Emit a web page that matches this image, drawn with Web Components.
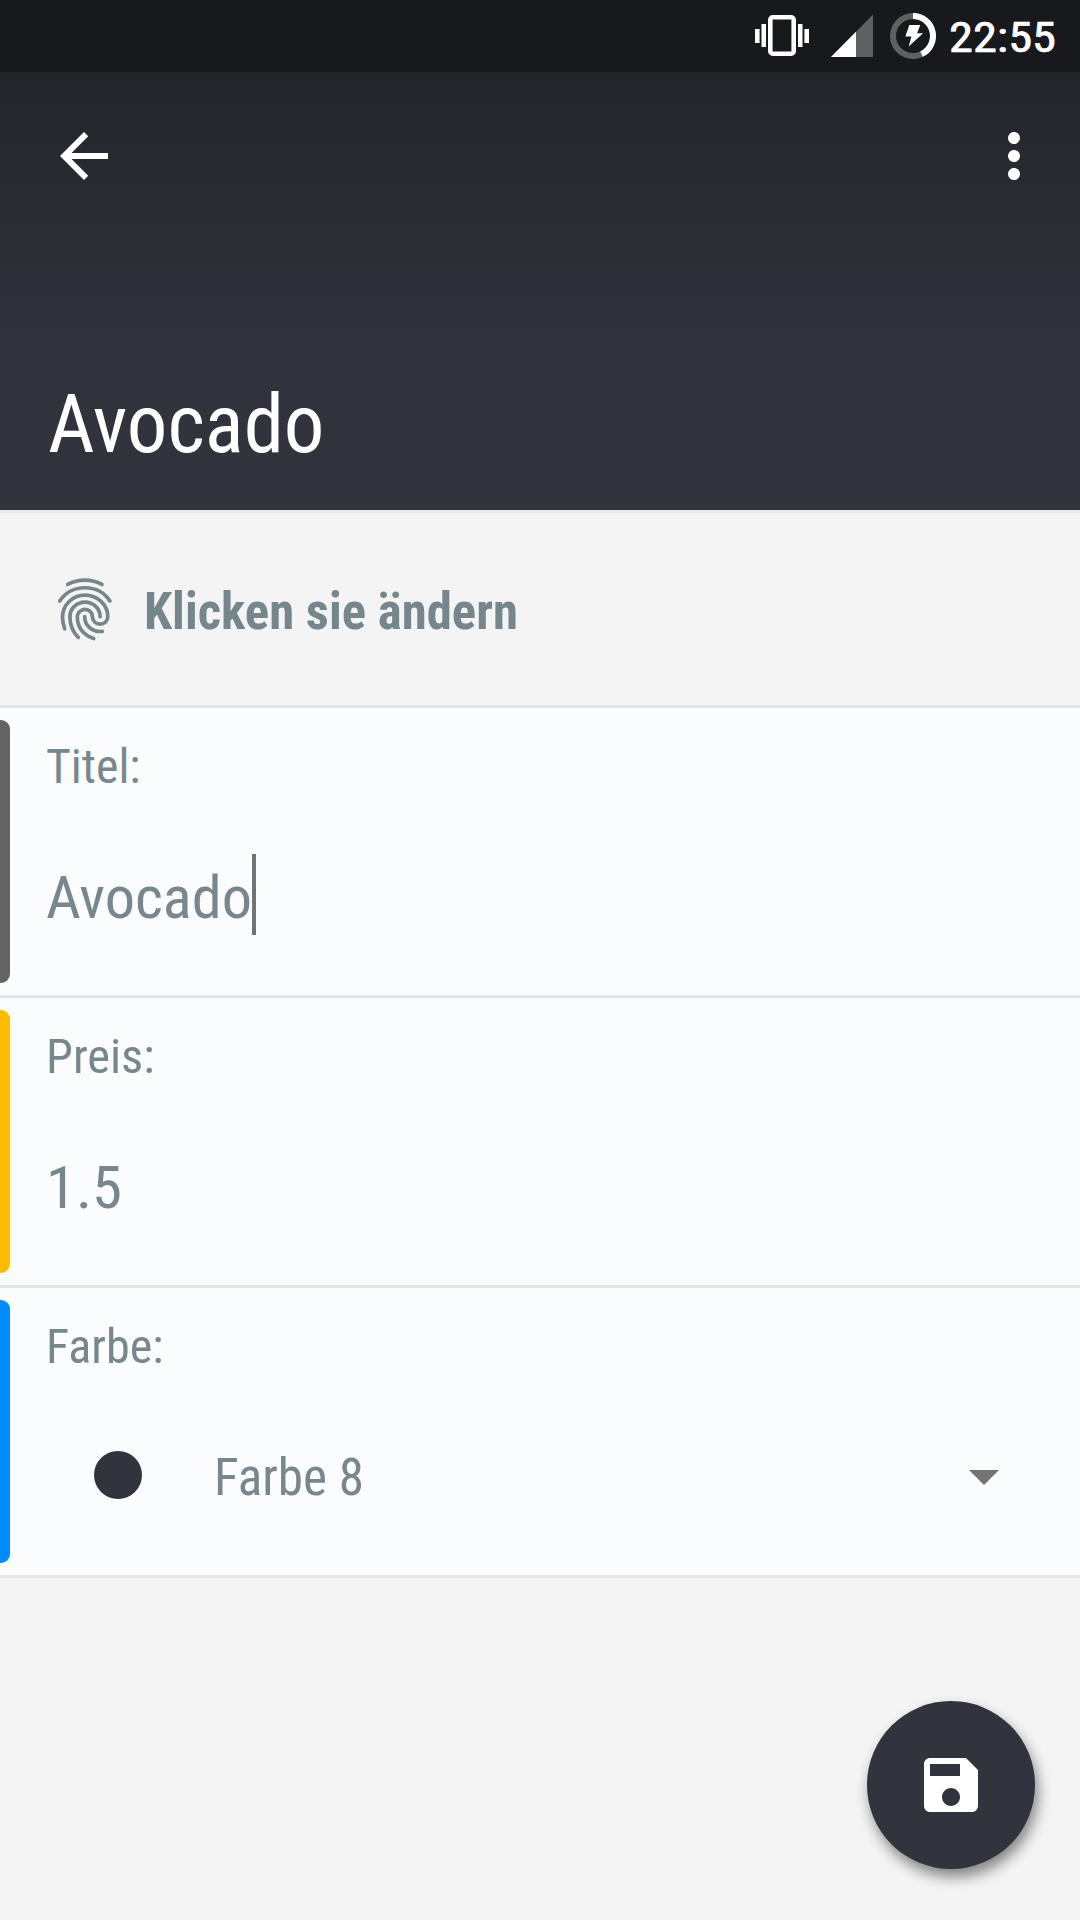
<!DOCTYPE html>
<html lang="de">
<head>
<meta charset="UTF-8">
<title>Avocado</title>
<style>
  body {
    margin: 0;
    background: #f4f4f4;
    color: #78868d;
    font-family: "Roboto Condensed", Roboto, "Liberation Sans", sans-serif;
  }
</style>
</head>
<body>
<edit-screen>
  <status-bar slot="header" time="22:55"></status-bar>
  <title-bar slot="header"><fit-text size="82" width="276.5">Avocado</fit-text></title-bar>
  <hint-row><fit-text size="52" width="374" weight="700">Klicken sie ändern</fit-text></hint-row>
  <form-row label="Titel:" label-width="94.5" style="--accent: #636363">
    <fit-text size="60" width="206">Avocado</fit-text><text-caret></text-caret>
  </form-row>
  <form-row label="Preis:" label-width="108.5" style="--accent: #ffbc00">
    <fit-text size="60" width="76">1.5</fit-text>
  </form-row>
  <form-row label="Farbe:" label-width="117.5" style="--accent: #008cff">
    <color-select><fit-text size="51" width="150">Farbe 8</fit-text></color-select>
  </form-row>
  <save-button slot="fab"></save-button>
</edit-screen>

<script>
// one line of text, set to a fixed advance width
class FitText extends HTMLElement {
  constructor() {
    super();
    this.attachShadow({ mode: 'open' });
  }

  connectedCallback() {
    const size = Number(this.getAttribute('size'));
    const width = this.getAttribute('width');
    const weight = this.getAttribute('weight') || 400;
    this.shadowRoot.innerHTML = `
      <style>
        :host { display: block; flex: none; width: ${width}px; height: ${size}px; }
        svg { display: block; overflow: visible; }
        text { font-size: ${size}px; font-weight: ${weight}; font-stretch: var(--stretch, 75%); fill: currentColor; stroke: currentColor; stroke-width: var(--embolden, 0); }
      </style>
      <svg width="${width}" height="${size}">
        <text x="0" y="${size * 0.8}" textLength="${width}" lengthAdjust="spacingAndGlyphs"></text>
      </svg>
    `;
    this.shadowRoot.querySelector('text').textContent = this.textContent;
  }
}

class EditScreen extends HTMLElement {
  constructor() {
    super();
    this.attachShadow({ mode: 'open' });
    this.shadowRoot.innerHTML = `
      <style>
        :host { display: block; position: relative; width: 1080px; height: 1920px; overflow: hidden; background: #f4f4f4; }
        header {
          height: 510px;
          background: linear-gradient(#222428 0, #24252b 72px, #292b33 200px, #31333c 340px, #32343d 510px);
        }
        .fab { position: absolute; right: 45px; bottom: 51px; }
      </style>
      <header><slot name="header"></slot></header>
      <main><slot></slot></main>
      <div class="fab"><slot name="fab"></slot></div>
    `;
  }
}

class StatusBar extends HTMLElement {
  constructor() {
    super();
    this.attachShadow({ mode: 'open' });
  }

  connectedCallback() {
    this.shadowRoot.innerHTML = `
      <style>
        :host { display: flex; justify-content: flex-end; height: 72px; padding-right: 24px; background: #18191c; color: #fff; }
        svg { display: block; flex: none; }
        fit-text { --stretch: 100%; --embolden: 0.7px; margin: 17.8px 0 0 13px; }
      </style>
      <svg width="54" height="72" fill="#fff">
        <rect x="15.3" y="17.3" width="23.4" height="36.4" rx="2.5" fill="none" stroke="#fff" stroke-width="4.6"/>
        <path d="M6.5 24H11v23H6.5zM0 29h4.6v14H0zM43 24h4.5v23H43zM49.4 29H54v14h-4.6z"/>
      </svg>
      <svg width="42" height="72" style="margin-left: 22px">
        <path d="M42 14.5V57H0z" fill="#5f6062"/>
        <path d="M25 31.7V57H0z" fill="#fff"/>
      </svg>
      <svg width="46" height="72" style="margin-left: 17px">
        <circle cx="23" cy="36" r="20" fill="none" stroke="#5f6062" stroke-width="6"/>
        <path d="M23 16a20 20 0 0 1 8.5 38.1" fill="none" stroke="#fff" stroke-width="6"/>
        <path d="M19.3 25h11l-3.2 8.3h6L18.7 46.5l2.7-10h-6z" fill="#fff"/>
      </svg>
      <fit-text size="42.5" width="107">${this.getAttribute('time')}</fit-text>
    `;
  }
}

class TitleBar extends HTMLElement {
  constructor() {
    super();
    this.attachShadow({ mode: 'open' });
    this.shadowRoot.innerHTML = `
      <style>
        :host { display: flex; flex-direction: column; justify-content: space-between; box-sizing: border-box; height: 438px; padding: 48px 30px 42.4px 48px; color: #fff; }
        nav { display: flex; justify-content: space-between; }
      </style>
      <nav>
        <svg width="72" height="72" viewBox="0 0 24 24" fill="#fff"><path d="M20 11H7.83l5.59-5.59L12 4l-8 8 8 8 1.41-1.41L7.83 13H20v-2z"/></svg>
        <svg width="72" height="72" viewBox="0 0 24 24" fill="#fff"><path d="M12 8c1.1 0 2-.9 2-2s-.9-2-2-2-2 .9-2 2 .9 2 2 2zm0 2c-1.1 0-2 .9-2 2s.9 2 2 2 2-.9 2-2-.9-2-2-2zm0 6c-1.1 0-2 .9-2 2s.9 2 2 2 2-.9 2-2-.9-2-2-2z"/></svg>
      </nav>
      <slot></slot>
    `;
  }
}

class HintRow extends HTMLElement {
  constructor() {
    super();
    this.attachShadow({ mode: 'open' });
    this.shadowRoot.innerHTML = `
      <style>
        :host { display: flex; align-items: flex-start; box-sizing: border-box; height: 198px; padding: 59px 0 0 48px; border-top: 3px solid #e9e9e9; border-bottom: 3px solid #e2e5e8; color: #76868d; }
        ::slotted(*) { margin: 15.4px 0 0 22px; }
        svg { flex: none; }
      </style>
      <svg width="74" height="74" viewBox="0 0 24 24" fill="none" stroke="#76868a" stroke-width="1.2" stroke-linecap="round">
        <path d="M6.4 4.05C8.1 3.1 9.9 2.65 12 2.65s3.8.45 5.5 1.4"/>
        <path d="M3.8 9.4C5.6 6.7 8.6 5.1 12 5.1s6.3 1.6 8.1 4.3"/>
        <path d="M5.4 18.4c-.5-1.5-.7-2.5-.7-3.7 0-4.1 3.3-7.2 7.3-7.2s7.4 3.1 7.4 7c0 1.4-1.1 2.4-2.5 2.4s-2.5-1-2.5-2.4-1.1-2.4-2.4-2.4-2.5 1.1-2.5 2.4c0 2.1.8 4 2.2 5.3 1 1 1.8 1.4 3.1 1.8"/>
        <path d="M9.8 21.2C8 19.4 7.1 17.2 7.1 14.5c0-2.6 2.2-4.7 4.9-4.7s4.9 2.1 4.9 4.7"/>
        <path d="M11.9 14.5c0 1.8.8 3 2 3.9 1.1.8 2.3 1 3.7.85"/>
      </svg>
      <slot></slot>
    `;
  }
}

class FormRow extends HTMLElement {
  constructor() {
    super();
    this.attachShadow({ mode: 'open' });
  }

  connectedCallback() {
    this.shadowRoot.innerHTML = `
      <style>
        :host { display: flex; align-items: flex-start; box-sizing: border-box; height: 290px; padding-top: 12px; background: #fafcfe; border-bottom: 3px solid #e4e5e7; }
        .bar { width: 10px; height: 263px; border-radius: 0 9px 9px 0; background: var(--accent); }
        .body { flex: 1; padding: 24.6px 0 0 36px; }
        .value { display: flex; align-items: flex-start; margin-top: 61.4px; height: 81px; }
        .value ::slotted(fit-text) { margin-top: 16.3px; }
      </style>
      <div class="bar"></div>
      <div class="body">
        <fit-text size="48" width="${this.getAttribute('label-width')}">${this.getAttribute('label')}</fit-text>
        <div class="value"><slot></slot></div>
      </div>
    `;
  }
}

class TextCaret extends HTMLElement {
  constructor() {
    super();
    this.attachShadow({ mode: 'open' });
    this.shadowRoot.innerHTML = `
      <style>
        :host { display: block; width: 4px; height: 81px; background: #737373; }
      </style>
    `;
  }
}

class ColorSelect extends HTMLElement {
  constructor() {
    super();
    this.attachShadow({ mode: 'open' });
    this.shadowRoot.innerHTML = `
      <style>
        :host { display: flex; flex: 1; align-items: flex-start; padding: 0 81px 0 48px; }
        .dot { width: 48px; height: 48px; margin-top: 17px; border-radius: 50%; background: #32343d; }
        ::slotted(*) { margin: 20.2px 0 0 72px; }
        svg { margin: 36px 0 0 auto; }
      </style>
      <div class="dot"></div>
      <slot></slot>
      <svg width="30" height="15"><path d="M0 0h30L15 15z" fill="#737373"/></svg>
    `;
  }
}

class SaveButton extends HTMLElement {
  constructor() {
    super();
    this.attachShadow({ mode: 'open' });
    this.shadowRoot.innerHTML = `
      <style>
        :host { display: grid; place-items: center; width: 168px; height: 168px; border-radius: 50%; background: #32343d; box-shadow: 3px 8px 14px rgba(0, 0, 0, .46); }
      </style>
      <svg width="72" height="72" viewBox="0 0 24 24" fill="#fff"><path d="M17 3H5c-1.11 0-2 .9-2 2v14c0 1.1.89 2 2 2h14c1.1 0 2-.9 2-2V7l-4-4zm-5 16c-1.66 0-3-1.34-3-3s1.34-3 3-3 3 1.34 3 3-1.34 3-3 3zm3-10H5V5h10v4z"/></svg>
    `;
  }
}

customElements.define('fit-text', FitText);
customElements.define('edit-screen', EditScreen);
customElements.define('status-bar', StatusBar);
customElements.define('title-bar', TitleBar);
customElements.define('hint-row', HintRow);
customElements.define('form-row', FormRow);
customElements.define('text-caret', TextCaret);
customElements.define('color-select', ColorSelect);
customElements.define('save-button', SaveButton);
</script>
</body>
</html>
